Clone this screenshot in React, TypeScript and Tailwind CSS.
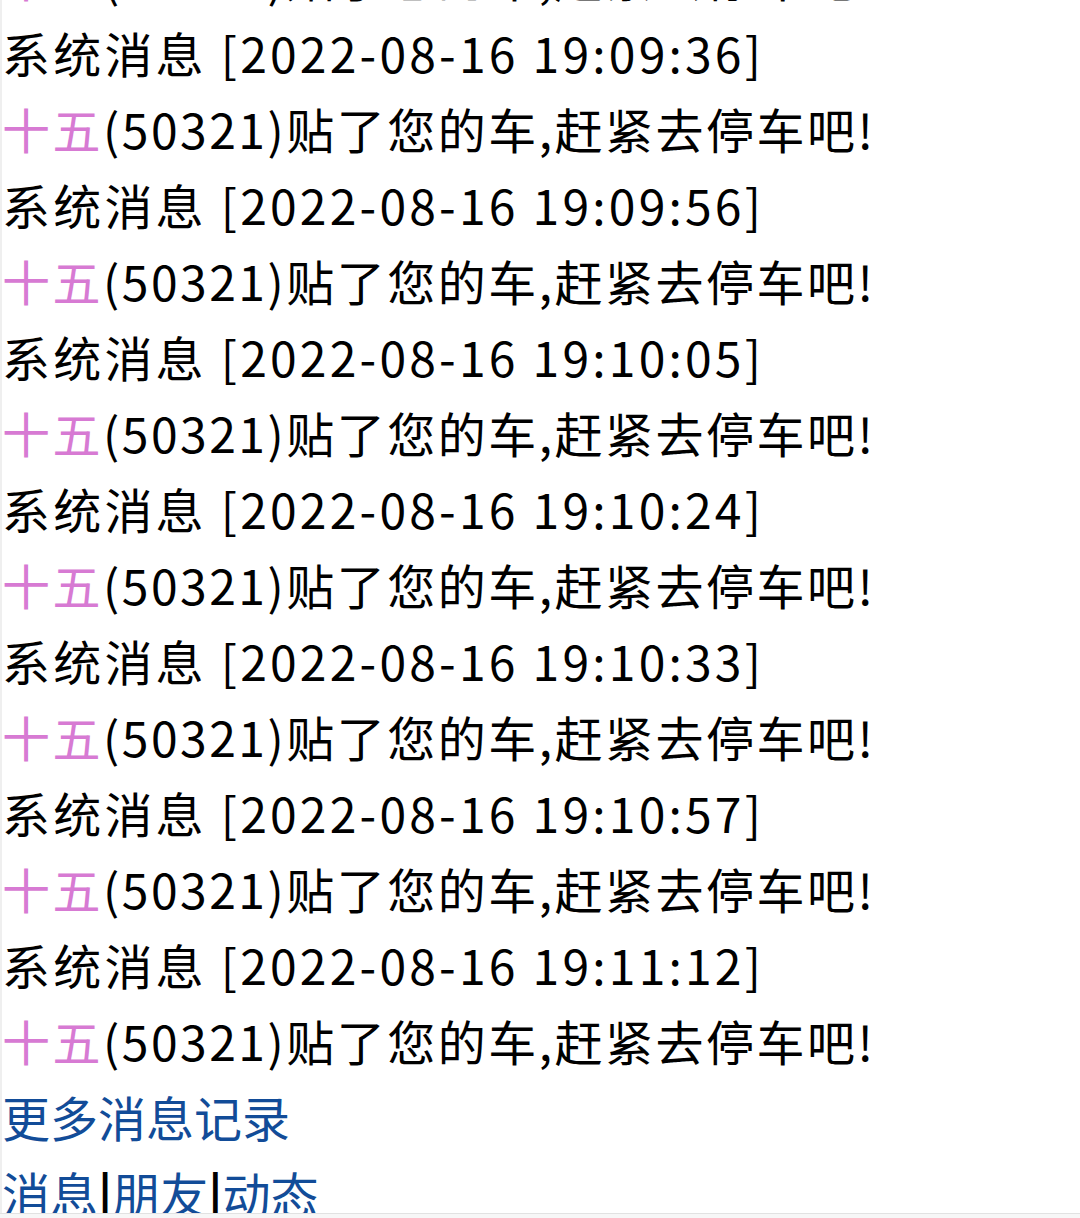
import React from 'react';

const times = ['19:09:36', '19:09:56', '19:10:05', '19:10:24', '19:10:33', '19:10:57', '19:11:12'];

function Sticker() {
  return (
    <div className="tracking-[2.5px]">
      <span className="text-[#d77ad3]">十五</span>
      (50321)贴了您的车,赶紧去停车吧!
    </div>
  );
}

function Sep() {
  return <span className="font-bold text-black">|</span>;
}

export default function App() {
  return (
    <div className="bg-[#f7f7f7]">
      <div
        className="h-[1213px] overflow-hidden border-l-2 border-[#efefef] bg-white text-[48px] leading-[76px] text-black"
        style={{ fontFamily: '"Noto Sans CJK SC", "Noto Sans", sans-serif' }}
      >
        <div className="-mt-[62px]">
          <Sticker />
          {times.map((t) => (
            <React.Fragment key={t}>
              <div className="tracking-[3.2px]">系统消息 [2022-08-16 {t}]</div>
              <Sticker />
            </React.Fragment>
          ))}
          <div>
            <a className="text-[#124c98]">更多消息记录</a>
          </div>
          <div>
            <a className="text-[#124c98]">消息</a>
            <Sep />
            <a className="text-[#124c98]">朋友</a>
            <Sep />
            <a className="text-[#124c98]">动态</a>
          </div>
        </div>
      </div>
      <div className="h-[5px] border-t border-[#e2e2e2]" />
    </div>
  );
}
